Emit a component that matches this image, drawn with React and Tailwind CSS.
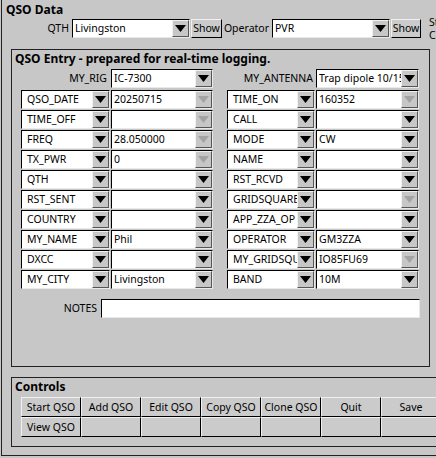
import React from "react";

const Arrow = ({ disabled }) => (
  <div className="w-[17px] h-full bg-[#c7c7c7] border-t border-l border-t-[#f2f2f2] border-l-[#f2f2f2] border-b border-r border-b-[#555] border-r-[#555] flex items-center justify-center">
    <svg width="11" height="7" viewBox="0 0 11 7">
      <polygon points="0,0 11,0 5.5,7" fill={disabled ? "#a3a3a3" : "#000"} />
    </svg>
  </div>
);

const Combo = ({ text = "", w, disabled, pad = "pl-[2px]" }) => (
  <div
    className={`h-[19px] ${w} flex bg-white border-t border-l border-t-black border-l-black border-b border-r border-b-[#e9e9e9] border-r-[#e9e9e9]`}
  >
    <div className={`flex-1 overflow-hidden whitespace-nowrap leading-[17px] ${pad}`}>{text}</div>
    <Arrow disabled={disabled} />
  </div>
);

const Btn = ({ children }) => (
  <div className="w-[60px] h-[20px] bg-[#cbcbcb] border-t border-l border-t-[#f0f0f0] border-l-[#f0f0f0] border-b border-r border-b-black border-r-black flex items-center justify-center leading-none">
    {children}
  </div>
);

const rows = [
  ["QSO_DATE", "20250715", true, "TIME_ON", "160352", true],
  ["TIME_OFF", "", true, "CALL", "", false],
  ["FREQ", "28.050000", true, "MODE", "CW", false],
  ["TX_PWR", "0", true, "NAME", "", false],
  ["QTH", "", false, "RST_RCVD", "", false],
  ["RST_SENT", "", false, "GRIDSQUARE", "", true],
  ["COUNTRY", "", false, "APP_ZZA_OP", "", false],
  ["MY_NAME", "Phil", false, "OPERATOR", "GM3ZZA", false],
  ["DXCC", "", false, "MY_GRIDSQUARE", "IO85FU69", true],
  ["MY_CITY", "Livingston", false, "BAND", "10M", false],
];

export default function App() {
  return (
    <div className="w-[436px] h-[458px] overflow-hidden bg-[#c7c7c7] text-black text-[10.5px] font-['Noto_Sans',sans-serif]">
      {/* QSO Data frame */}
      <div className="ml-[1px] w-[600px] h-[456px] border-l border-b border-[#222]">
        <div className="pl-[4px] pt-[2px] h-[19px] text-[12px] font-bold leading-[16px]">QSO Data</div>

        <div className="flex items-start h-[19px]">
          <div className="w-[67px] text-right leading-[19px]">QTH</div>
          <div className="ml-[3px]">
            <Combo text="Livingston" w="w-[118px]" />
          </div>
          <div className="ml-[1px] w-[31px] h-[19px] bg-[#cbcbcb] border-t border-l border-t-[#f0f0f0] border-l-[#f0f0f0] border-b border-r border-b-black border-r-black flex items-center justify-center">
            Show
          </div>
          <div className="w-[47px] text-right leading-[19px]">Operator</div>
          <div className="ml-[3px]">
            <Combo text="PVR" w="w-[118px]" />
          </div>
          <div className="ml-[1px] w-[30px] h-[19px] bg-[#cbcbcb] border-t border-l border-t-[#f0f0f0] border-l-[#f0f0f0] border-b border-r border-b-black border-r-black flex items-center justify-center">
            Show
          </div>
          <div className="ml-[8px] -mt-[3px] w-[20px] leading-[13px] overflow-hidden whitespace-nowrap">
            <div>Status</div>
            <div>Call</div>
          </div>
        </div>

        {/* QSO Entry frame */}
        <div className="ml-[9px] mt-[11px] w-[419px] h-[318px] border border-[#222]">
          <div className="pl-[3px] h-[19px] text-[12px] font-bold leading-[17px]">
            QSO Entry - prepared for real-time logging.
          </div>

          <div className="flex items-start">
            <div className="w-[95px] text-right leading-[19px]">MY_RIG</div>
            <div className="ml-[4px]">
              <Combo text="IC-7300" w="w-[102px]" />
            </div>
            <div className="w-[100px] text-right leading-[19px]">MY_ANTENNA</div>
            <div className="ml-[3px]">
              <Combo text="Trap dipole 10/15/20" w="w-[103px]" />
            </div>
          </div>

          <div className="mt-[2px] pl-[9px] flex flex-col gap-[1px]">
            {rows.map(([l1, v1, d1, l2, v2, d2]) => (
              <div key={l1} className="flex">
                <Combo text={l1} w="w-[89px]" pad="pl-[5px]" />
                <div className="ml-[1px]">
                  <Combo text={v1} w="w-[102px]" disabled={d1} />
                </div>
                <div className="ml-[14px]">
                  <Combo text={l2} w="w-[88px]" pad="pl-[5px]" />
                </div>
                <div className="ml-[1px]">
                  <Combo text={v2} w="w-[103px]" disabled={d2} />
                </div>
              </div>
            ))}
          </div>

          <div className="mt-[10px] flex items-start">
            <div className="w-[85px] text-right leading-[19px]">NOTES</div>
            <div className="ml-[4px] w-[319px] h-[19px] bg-white border-t border-l border-t-black border-l-black border-b border-r border-b-[#e9e9e9] border-r-[#e9e9e9]" />
          </div>
        </div>

        {/* Controls frame */}
        <div className="ml-[9px] mt-[10px] w-[500px] h-[70px] border border-[#222]">
          <div className="pl-[3px] h-[19px] text-[12px] font-bold leading-[17px]">Controls</div>
          <div className="pl-[9px]">
            <div className="flex">
              <Btn>Start QSO</Btn>
              <Btn>Add QSO</Btn>
              <Btn>Edit QSO</Btn>
              <Btn>Copy QSO</Btn>
              <Btn>Clone QSO</Btn>
              <Btn>Quit</Btn>
              <Btn>Save</Btn>
            </div>
            <div className="flex">
              <Btn>View QSO</Btn>
              <Btn />
              <Btn />
              <Btn />
              <Btn />
              <Btn />
              <Btn />
            </div>
          </div>
        </div>
      </div>
    </div>
  );
}
